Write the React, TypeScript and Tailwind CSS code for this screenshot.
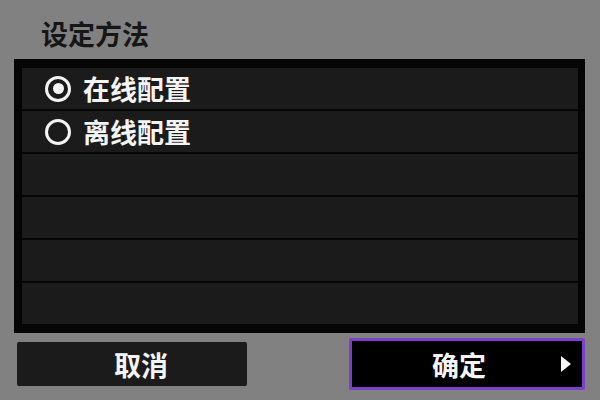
import React from "react";

const font = { fontFamily: '"Noto Sans CJK SC", "Noto Sans", sans-serif' };

function Radio({ checked }: { checked: boolean }) {
  return (
    <div className="w-[26px] h-[26px] rounded-full border-[3px] border-[#f4f4f4] flex items-center justify-center shrink-0">
      {checked && <div className="w-[11px] h-[11px] rounded-full bg-[#f4f4f4]" />}
    </div>
  );
}

export default function App() {
  const rows: (string | null)[] = ["在线配置", "离线配置", null, null, null, null];
  return (
    <div
      className="w-[600px] h-[400px] bg-[#808180] flex flex-col overflow-hidden"
      style={font}
    >
      <div className="h-[59px] pl-[41px] pt-[16px] text-[27px] leading-[36px] font-bold text-[#161616] tracking-[0px]">
        设定方法
      </div>
      <div className="ml-[14px] w-[571px] h-[274px] bg-[#050505] pt-[9px] pb-[8px] pl-[8px] pr-[7px] flex flex-col gap-[2px]">
        {rows.map((r, i) => (
          <div
            key={i}
            className="h-[41px] bg-[#1a1b1a] flex items-center pl-[23px] gap-[12px]"
          >
            {r && (
              <>
                <Radio checked={i === 0} />
                <span className="text-[27px] leading-none font-bold text-[#f4f4f4]">
                  {r}
                </span>
              </>
            )}
          </div>
        ))}
      </div>
      <div className="flex items-center mt-[5px] h-[52px]">
        <div className="ml-[17px] w-[230px] h-[44px] bg-[#1a1b1a] rounded-[2px] flex items-center justify-center pl-[18px] text-[27px] font-bold text-[#f4f4f4] leading-none">
          取消
        </div>
        <div className="ml-[102px] w-[236px] h-[52px] bg-black border-[3px] border-[#7b3fc9] rounded-[2px] relative flex items-center justify-center pr-[16px] text-[27px] font-bold text-[#f4f4f4] leading-none">
          确定
          <svg
            className="absolute right-[11px] top-1/2 -translate-y-1/2"
            width="10"
            height="16"
            viewBox="0 0 10 16"
          >
            <polygon points="0,0 10,8 0,16" fill="#f4f4f4" />
          </svg>
        </div>
      </div>
    </div>
  );
}
